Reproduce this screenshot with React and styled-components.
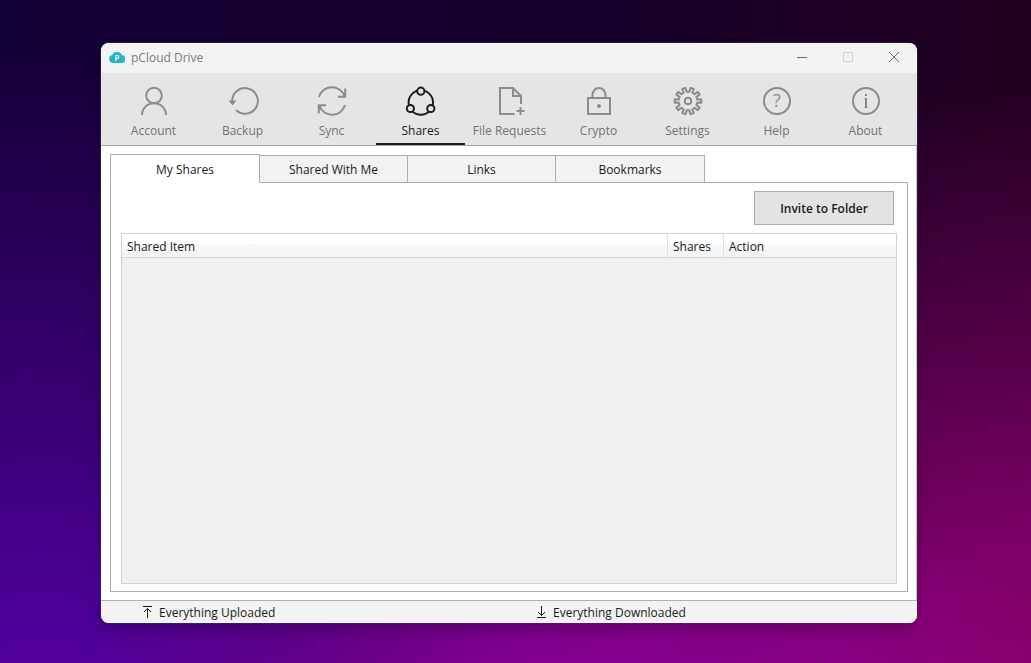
import { useState } from "react";
import styled, { createGlobalStyle, css } from "styled-components";

const GlobalStyle = createGlobalStyle`
  * { box-sizing: border-box; }
  body { margin: 0; font-family: "Open Sans", "Noto Sans", sans-serif; font-size: 12px; line-height: 16px; color: #1a1a1a; }
  button { font: inherit; color: inherit; border: none; background: none; padding: 0; margin: 0; cursor: pointer; }
`;

const Desktop = styled.div`
  min-height: 100vh; display: flex;
  padding: 43px 114px 40px 101px;
  background:
    radial-gradient(ellipse 50% 45% at 56% 112%, #9a00a8 0%, transparent 100%),
    radial-gradient(ellipse 70% 95% at 100% 108%, #8a0068 0%, #84006eee 25%, transparent 100%),
    radial-gradient(ellipse 60% 100% at 4% 108%, #5800a8 0%, transparent 100%),
    linear-gradient(90deg, #140038 0%, #14002e 50%, #22001f 100%);
`;
const Window = styled.main`
  flex: 1; display: flex; flex-direction: column;
  background: #fff; border-radius: 8px; overflow: hidden;
  box-shadow: 0 0 0 1px rgba(60, 50, 70, 0.5), 0 6px 14px rgba(0, 0, 0, 0.2);
`;
const TitleBar = styled.header`
  height: 30px; display: flex; align-items: center; gap: 6px;
  padding-left: 8px; background: #f3f3f3; color: #7c7c7c;
`;
const Title = styled.h1`flex: 1; margin: 0; font-size: 12px; font-weight: 400;`;
const WindowControls = styled.div`display: flex;`;
const WindowButton = styled.button`
  width: 46px; height: 30px; display: flex; align-items: center; justify-content: center;
  color: ${({ disabled }) => (disabled ? "#cfcfcf" : "#707070")};
`;
const Toolbar = styled.nav`
  display: grid; grid-template-columns: repeat(9, 1fr);
  height: 73px; padding: 0 7px 0 8px;
  background: #e5e5e5; border-bottom: 1px solid #a5a5a5;
`;
const ToolButton = styled.button`
  display: flex; flex-direction: column; align-items: center; gap: 6px;
  padding-top: 12px; white-space: nowrap;
  border-bottom: 2px solid transparent;
  color: #727272;
  svg { color: #8c8c8c; }
  ${({ $active }) => $active && css`
    color: #1a1a1a; border-color: #1c1c1c;
    svg { color: #1c1c1c; }
  `}
`;
const Content = styled.section`
  flex: 1; display: flex; flex-direction: column;
  padding: 8px 8px 8px 9px; border-right: 1px solid #c4c4c4;
`;
const Tabs = styled.div`display: flex; align-items: flex-end; margin-bottom: -1px;`;
const Tab = styled.button`
  position: relative;
  flex: 0 1 149px; height: 28px; padding-top: 2px;
  background: #f2f2f2; border: 1px solid #acacac; margin-left: -1px;
  ${({ $active }) => $active && css`
    flex-basis: 150px; height: 29px; margin-left: 0; z-index: 1;
    background: #fff; border-bottom-color: #fff;
  `}
  &:last-child { flex-basis: 150px; }
`;
const Panel = styled.div`
  flex: 1; display: flex; flex-direction: column;
  padding: 8px 10px 7px; border: 1px solid #acacac;
`;
const Actions = styled.div`display: flex; justify-content: flex-end; padding: 0 3px 8px;`;
const InviteButton = styled.button`
  width: 140px; height: 34px; padding-top: 2px;
  background: #e3e3e3; border: 1px solid #acacac;
  font-weight: 600;
`;
const ListView = styled.div`flex: 1; background: #f0f0f0; border: 1px solid #d0d2d5;`;
const Table = styled.table`width: 100%; border-collapse: separate; border-spacing: 0; table-layout: fixed;`;
const HeadCell = styled.th`
  width: ${({ $width }) => $width || "auto"};
  height: 24px; padding: 2px 0 0 5px;
  text-align: left; font-weight: 400;
  background: linear-gradient(#fff 0, #fff 45%, #f5f6f8 46%, #f2f3f5 100%);
  border-bottom: 1px solid #d5d5d5;
  & + & { border-left: 1px solid #dfe0e2; }
`;
const StatusBar = styled.footer`
  display: grid; grid-template-columns: 394px 1fr;
  height: 23px; padding: 2px 0 0 41px; align-items: center;
  background: #f3f3f3; border-top: 1px solid #b0b0b0;
`;
const Status = styled.span`display: flex; align-items: center; gap: 6px;`;

function ToolIcon({ children }) {
  return (
    <svg width="32" height="32" viewBox="0 0 32 32" fill="none" stroke="currentColor" strokeWidth="2" aria-hidden="true">
      {children}
    </svg>
  );
}

// closed outline of a cog, two outer and two inner points per tooth
function gearPath(teeth, outer, inner) {
  const step = (Math.PI * 2) / teeth;
  const points = [];
  for (let i = 0; i < teeth; i++) {
    const mid = i * step - Math.PI / 2 + step / 2;
    [[-0.27, inner], [-0.2, outer], [0.2, outer], [0.27, inner]].forEach(([offset, r]) => {
      const a = mid + offset * step;
      points.push(`${(16 + r * Math.cos(a)).toFixed(2)} ${(16 + r * Math.sin(a)).toFixed(2)}`);
    });
  }
  return `M${points.join("L")}Z`;
}

const tools = [
  { name: "Account", icon: <><circle cx="16" cy="10.5" r="7.8" /><path d="M4 30a12 11.8 0 0 1 24 0" /></> },
  { name: "Backup", icon: <><path d="M5.3 17A12.8 12.8 0 1 1 9 25" /><path d="M1.5 15.5H9.5L5.5 20.5Z" fill="currentColor" stroke="none" /></> },
  { name: "Sync", icon: <><path d="M3 12A13.4 13.4 0 0 1 28.5 11M29.2 3.5V11.7H22M29 20A13.4 13.4 0 0 1 3.5 21M2.8 28.5V20.3H10" /></> },
  {
    name: "Shares",
    icon: (
      <>
        <circle cx="15.8" cy="17.5" r="12.2" />
        <g fill="#e5e5e5">
          <circle cx="15.8" cy="6.2" r="3.6" />
          <circle cx="5.4" cy="23.5" r="3.6" />
          <circle cx="25.8" cy="23.5" r="3.6" />
        </g>
      </>
    ),
  },
  { name: "File Requests", icon: <path d="M20.5 29H6V3H19L27 11V19M19 3V11H27M26.5 22V30M22.5 26H30.5" /> },
  { name: "Crypto", icon: <><path d="M5 13H27V29H5ZM9.5 13V10a6.5 7 0 0 1 13 0V13" /><circle cx="16" cy="21" r="2" fill="currentColor" stroke="none" /></> },
  { name: "Settings", icon: <><path d={gearPath(10, 13.4, 9.4)} strokeLinejoin="round" /><circle cx="16" cy="16" r="3.3" /></> },
  { name: "Help", icon: <><circle cx="16" cy="16" r="13" /><text x="16" y="22" textAnchor="middle" fontSize="18" fill="currentColor" stroke="none">?</text></> },
  { name: "About", icon: <><circle cx="16" cy="16" r="13" /><path d="M16 9V11M16 13V23" /><path d="M14.5 13.5H16M14.5 22.5H17.5" strokeWidth="1" /></> },
];

const tabs = ["My Shares", "Shared With Me", "Links", "Bookmarks"];

function CloudLogo() {
  return (
    <svg width="16" height="14" viewBox="0 0 16 14" aria-hidden="true">
      <path d="M4 12a4 4 0 0 1-.7-7.9A5 5 0 0 1 12.7 4 4 4 0 0 1 12 12Z" fill="#26b3c6" />
      <text x="8" y="9.5" textAnchor="middle" fontSize="8" fontWeight="600" fill="#fff">P</text>
    </svg>
  );
}

export default function App() {
  const [tool, setTool] = useState("Shares");
  const [tab, setTab] = useState("My Shares");

  return (
    <>
      <GlobalStyle />
      <Desktop>
        <Window>
          <TitleBar>
            <CloudLogo />
            <Title>pCloud Drive</Title>
            <WindowControls>
              <WindowButton aria-label="Minimize">
                <svg width="12" height="12" fill="none" stroke="currentColor"><path d="M1 5.5H11" /></svg>
              </WindowButton>
              <WindowButton aria-label="Maximize" disabled>
                <svg width="12" height="12" fill="none" stroke="currentColor"><rect x="1.5" y="0.5" width="9" height="9" /></svg>
              </WindowButton>
              <WindowButton aria-label="Close">
                <svg width="12" height="12" fill="none" stroke="currentColor"><path d="M1 0L11 10M11 0L1 10" /></svg>
              </WindowButton>
            </WindowControls>
          </TitleBar>

          <Toolbar>
            {tools.map(({ name, icon }) => (
              <ToolButton key={name} $active={tool === name} onClick={() => setTool(name)}>
                <ToolIcon>{icon}</ToolIcon>
                {name}
              </ToolButton>
            ))}
          </Toolbar>

          <Content>
            <Tabs role="tablist">
              {tabs.map((name) => (
                <Tab key={name} role="tab" aria-selected={tab === name} $active={tab === name} onClick={() => setTab(name)}>
                  {name}
                </Tab>
              ))}
            </Tabs>
            <Panel role="tabpanel">
              <Actions><InviteButton>Invite to Folder</InviteButton></Actions>
              <ListView>
                <Table>
                  <thead>
                    <tr>
                      <HeadCell>Shared Item</HeadCell>
                      <HeadCell $width="56px">Shares</HeadCell>
                      <HeadCell $width="173px">Action</HeadCell>
                    </tr>
                  </thead>
                  <tbody />
                </Table>
              </ListView>
            </Panel>
          </Content>

          <StatusBar>
            <Status>
              <svg width="11" height="16" fill="none" stroke="currentColor"><path d="M1 1.5H10M5.5 13V3.5M2 7L5.5 3.5L9 7" /></svg>
              Everything Uploaded
            </Status>
            <Status>
              <svg width="11" height="16" fill="none" stroke="currentColor"><path d="M1 12.5H10M5.5 1V10.5M2 7L5.5 10.5L9 7" /></svg>
              Everything Downloaded
            </Status>
          </StatusBar>
        </Window>
      </Desktop>
    </>
  );
}
